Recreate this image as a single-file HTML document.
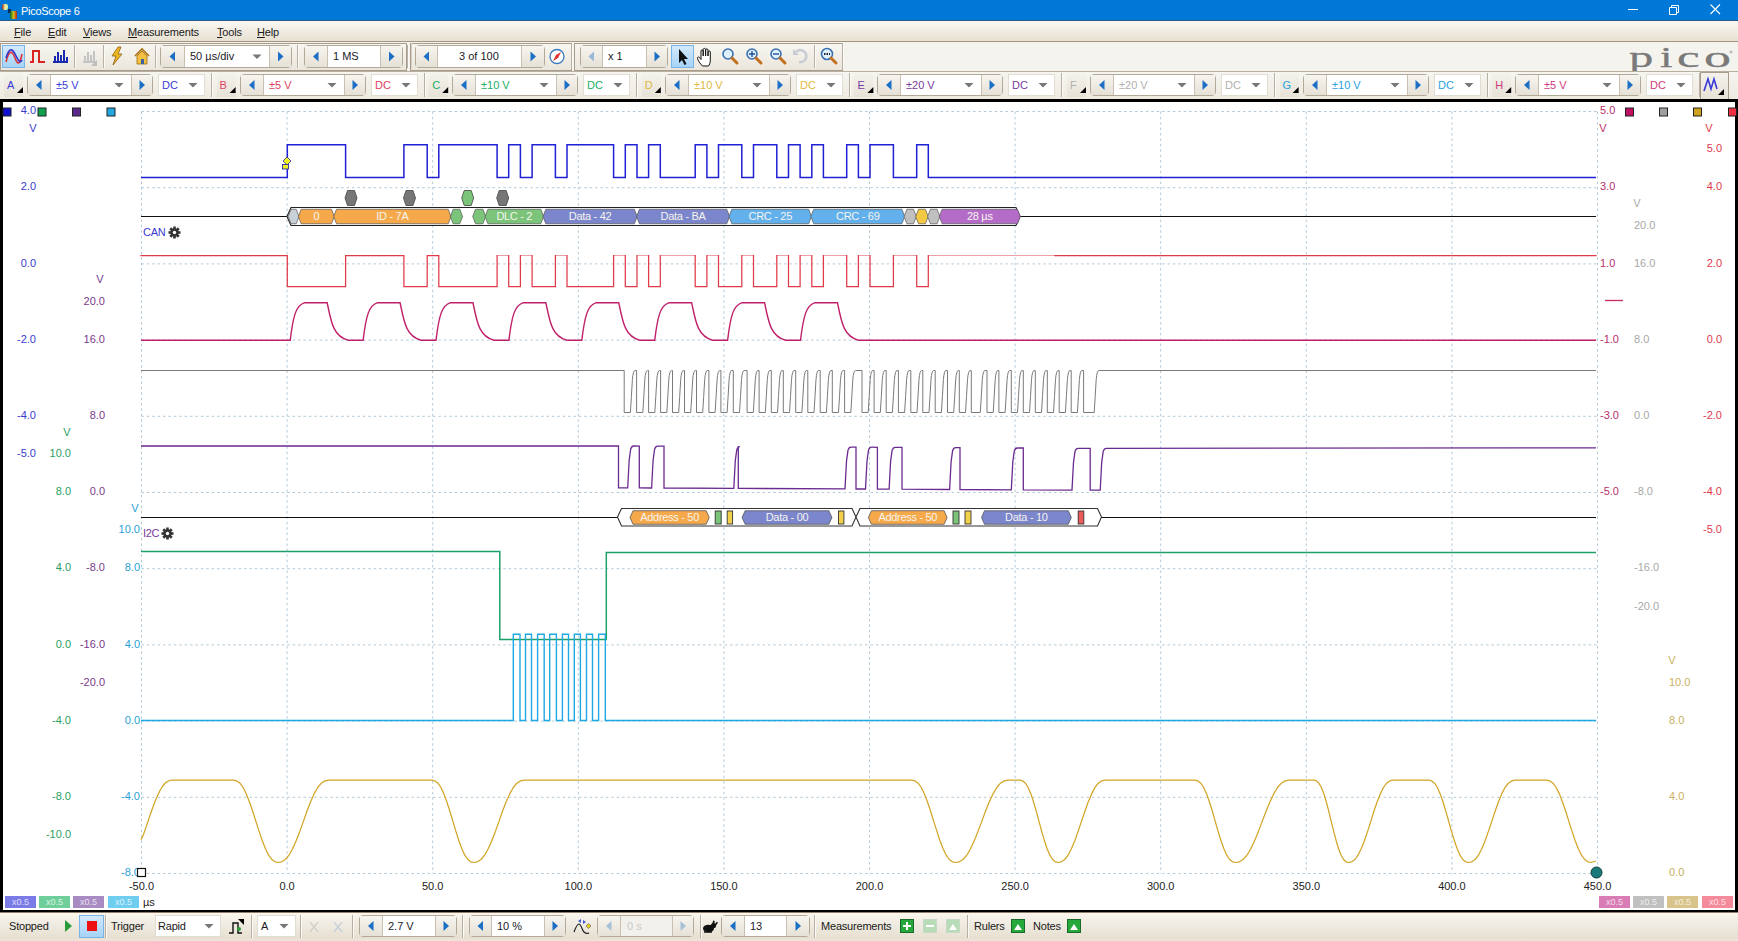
<!DOCTYPE html>
<html><head><meta charset="utf-8"><style>
html,body{margin:0;padding:0;}
body{width:1738px;height:941px;position:relative;overflow:hidden;background:#f0ece3;font-family:"Liberation Sans",sans-serif;}
.t{position:absolute;white-space:nowrap;}
svg{position:absolute;left:0;top:0;}
</style></head><body>

<div style="position:absolute;left:0px;top:0px;width:1738px;height:21px;background:#0078d7;"></div>
<div style="position:absolute;left:0px;top:20px;width:1738px;height:1px;background:#2a5a84;"></div>
<div class="t" style="left:21.0px;top:4.6px;width:200px;height:13px;line-height:13px;font-size:11px;color:#fff;text-align:left;letter-spacing:-0.3px;">PicoScope 6</div>
<div style="position:absolute;left:2px;top:3px;width:14px;height:16px;"><div style="position:absolute;left:0;top:1px;width:6px;height:6px;background:linear-gradient(90deg,#a02010,#f0f0a0 50%,#d0e8a0);border-radius:2px"></div><div style="position:absolute;left:6px;top:6px;width:3px;height:4px;background:#0a2a60;"></div><div style="position:absolute;left:8px;top:8px;width:7px;height:8px;background:linear-gradient(90deg,#0a6a20,#c8c020 50%,#c02010);border-radius:1px"></div></div>
<div style="position:absolute;left:0px;top:21px;width:1738px;height:20px;background:linear-gradient(#fcfaf4,#f1ede4 45%,#e8e1d3);"></div>
<div style="position:absolute;left:0px;top:41px;width:1738px;height:1px;background:#a39582;"></div>
<div class="t" style="left:14.0px;top:25.6px;width:200px;height:13px;line-height:13px;font-size:11px;color:#1a1a1a;text-align:left;letter-spacing:-0.15px;"><u>F</u>ile</div>
<div class="t" style="left:48.0px;top:25.6px;width:200px;height:13px;line-height:13px;font-size:11px;color:#1a1a1a;text-align:left;letter-spacing:-0.15px;"><u>E</u>dit</div>
<div class="t" style="left:83.0px;top:25.6px;width:200px;height:13px;line-height:13px;font-size:11px;color:#1a1a1a;text-align:left;letter-spacing:-0.15px;"><u>V</u>iews</div>
<div class="t" style="left:128.0px;top:25.6px;width:200px;height:13px;line-height:13px;font-size:11px;color:#1a1a1a;text-align:left;letter-spacing:-0.15px;"><u>M</u>easurements</div>
<div class="t" style="left:217.0px;top:25.6px;width:200px;height:13px;line-height:13px;font-size:11px;color:#1a1a1a;text-align:left;letter-spacing:-0.15px;"><u>T</u>ools</div>
<div class="t" style="left:257.0px;top:25.6px;width:200px;height:13px;line-height:13px;font-size:11px;color:#1a1a1a;text-align:left;letter-spacing:-0.15px;"><u>H</u>elp</div>
<div style="position:absolute;left:0px;top:42px;width:1738px;height:29px;background:#f5f3ee;"></div>
<div style="position:absolute;left:0px;top:43px;width:407px;height:28px;box-sizing:border-box;border:1px solid #a89c8c;background:linear-gradient(#f8f6f1,#ebe6dc);"></div>
<div style="position:absolute;left:410px;top:43px;width:162px;height:28px;box-sizing:border-box;border:1px solid #a89c8c;background:linear-gradient(#f8f6f1,#ebe6dc);"></div>
<div style="position:absolute;left:574px;top:43px;width:269px;height:28px;box-sizing:border-box;border:1px solid #a89c8c;background:linear-gradient(#f8f6f1,#ebe6dc);"></div>
<div style="position:absolute;left:0px;top:71px;width:1738px;height:1px;background:#b9afa0;"></div>
<div style="position:absolute;left:0px;top:72px;width:1738px;height:27px;background:linear-gradient(#f7f5f0,#eeeae1);"></div>
<div style="position:absolute;left:2px;top:45px;width:23px;height:23px;box-sizing:border-box;border:1px solid #78b4e6;background:linear-gradient(#d3e9fb,#a6d3f6);"></div>
<div style="position:absolute;left:74px;top:45px;width:1px;height:23px;background:#b8b0a4;"></div>
<div style="position:absolute;left:75px;top:45px;width:1px;height:23px;background:#fbfaf7;"></div>
<div style="position:absolute;left:103px;top:45px;width:1px;height:23px;background:#b8b0a4;"></div>
<div style="position:absolute;left:104px;top:45px;width:1px;height:23px;background:#fbfaf7;"></div>
<div style="position:absolute;left:155px;top:45px;width:1px;height:23px;background:#b8b0a4;"></div>
<div style="position:absolute;left:156px;top:45px;width:1px;height:23px;background:#fbfaf7;"></div>
<div style="position:absolute;left:160px;top:45px;width:132px;height:23px;box-sizing:border-box;border:1px solid #b3a999;border-radius:4px;background:#fff;"></div>
<div style="position:absolute;left:161px;top:46px;width:23px;height:21px;background:linear-gradient(#f7f5f0,#e6e1d6);"></div>
<div style="position:absolute;left:184px;top:46px;width:1px;height:21px;background:#c9c0b2;"></div>
<div style="position:absolute;left:269px;top:46px;width:1px;height:21px;background:#c9c0b2;"></div>
<div style="position:absolute;left:270px;top:46px;width:21px;height:21px;background:linear-gradient(#f7f5f0,#e6e1d6);"></div>
<div class="t" style="left:190.0px;top:50.1px;width:200px;height:13px;line-height:13px;font-size:11px;color:#1a1a2a;text-align:left;">50 µs/div</div>
<div style="position:absolute;left:297px;top:45px;width:1px;height:23px;background:#b8b0a4;"></div>
<div style="position:absolute;left:298px;top:45px;width:1px;height:23px;background:#fbfaf7;"></div>
<div style="position:absolute;left:304px;top:45px;width:99px;height:23px;box-sizing:border-box;border:1px solid #b3a999;border-radius:4px;background:#fff;"></div>
<div style="position:absolute;left:305px;top:46px;width:22px;height:21px;background:linear-gradient(#f7f5f0,#e6e1d6);"></div>
<div style="position:absolute;left:327px;top:46px;width:1px;height:21px;background:#c9c0b2;"></div>
<div style="position:absolute;left:380px;top:46px;width:1px;height:21px;background:#c9c0b2;"></div>
<div style="position:absolute;left:381px;top:46px;width:21px;height:21px;background:linear-gradient(#f7f5f0,#e6e1d6);"></div>
<div class="t" style="left:333.0px;top:50.1px;width:200px;height:13px;line-height:13px;font-size:11px;color:#1a1a2a;text-align:left;">1 MS</div>
<div style="position:absolute;left:407px;top:45px;width:1px;height:23px;background:#b8b0a4;"></div>
<div style="position:absolute;left:408px;top:45px;width:1px;height:23px;background:#fbfaf7;"></div>
<div style="position:absolute;left:411px;top:43px;width:1px;height:26px;background:#d8d1c4"></div>
<div style="position:absolute;left:415px;top:45px;width:130px;height:23px;box-sizing:border-box;border:1px solid #b3a999;border-radius:4px;background:#fff;"></div>
<div style="position:absolute;left:416px;top:46px;width:21px;height:21px;background:linear-gradient(#f7f5f0,#e6e1d6);"></div>
<div style="position:absolute;left:437px;top:46px;width:1px;height:21px;background:#c9c0b2;"></div>
<div style="position:absolute;left:521px;top:46px;width:1px;height:21px;background:#c9c0b2;"></div>
<div style="position:absolute;left:522px;top:46px;width:22px;height:21px;background:linear-gradient(#f7f5f0,#e6e1d6);"></div>
<div class="t" style="left:459.0px;top:50.1px;width:200px;height:13px;line-height:13px;font-size:11px;color:#1a1a2a;text-align:left;">3 of 100</div>
<div style="position:absolute;left:571px;top:43px;width:1px;height:26px;background:#b8b0a4;"></div>
<div style="position:absolute;left:572px;top:43px;width:1px;height:26px;background:#fbfaf7;"></div>
<div style="position:absolute;left:580px;top:45px;width:88px;height:23px;box-sizing:border-box;border:1px solid #b3a999;border-radius:4px;background:#fff;"></div>
<div style="position:absolute;left:581px;top:46px;width:21px;height:21px;background:linear-gradient(#f7f5f0,#e6e1d6);"></div>
<div style="position:absolute;left:602px;top:46px;width:1px;height:21px;background:#c9c0b2;"></div>
<div style="position:absolute;left:646px;top:46px;width:1px;height:21px;background:#c9c0b2;"></div>
<div style="position:absolute;left:647px;top:46px;width:20px;height:21px;background:linear-gradient(#f7f5f0,#e6e1d6);"></div>
<div class="t" style="left:608.0px;top:50.1px;width:200px;height:13px;line-height:13px;font-size:11px;color:#1a1a2a;text-align:left;">x 1</div>
<div style="position:absolute;left:671px;top:45px;width:23px;height:23px;box-sizing:border-box;border:1px solid #78b4e6;background:linear-gradient(#d3e9fb,#a6d3f6);"></div>
<div style="position:absolute;left:814px;top:45px;width:1px;height:23px;background:#b8b0a4;"></div>
<div style="position:absolute;left:815px;top:45px;width:1px;height:23px;background:#fbfaf7;"></div>
<div style="position:absolute;left:842px;top:43px;width:1px;height:26px;background:#b8b0a4;"></div>
<div style="position:absolute;left:843px;top:43px;width:1px;height:26px;background:#fbfaf7;"></div>
<div style="position:absolute;left:1620px;top:40px;width:118px;height:31px;overflow:hidden;"><svg width="118" height="32" style="position:absolute;left:0;top:0"><g font-family="Liberation Serif" font-size="30" fill="#7a7a7a" stroke="#7a7a7a" stroke-width="0.3"><text transform="translate(9,27.2) scale(1.62,1)">p</text><text transform="translate(40,27.2) scale(1.5,1)">i</text><text transform="translate(57,27.2) scale(1.7,1)">c</text><text transform="translate(84,27.2) scale(1.8,1)">o</text></g><circle cx="111" cy="12" r="1.5" fill="#bbb"/></svg></div>
<div style="position:absolute;left:4.0px;top:73px;width:19px;height:24px;background:linear-gradient(#f4f2ec,#e7e2d7);"></div>
<div class="t" style="left:7.0px;top:78.6px;width:200px;height:13px;line-height:13px;font-size:11px;color:#3a3ad8;text-align:left;">A</div>
<div style="position:absolute;left:27px;top:74px;width:126px;height:22px;box-sizing:border-box;border:1px solid #b3a999;border-radius:4px;background:#fff;"></div>
<div style="position:absolute;left:28px;top:75px;width:22px;height:20px;background:linear-gradient(#f7f5f0,#e6e1d6);"></div>
<div style="position:absolute;left:50px;top:75px;width:1px;height:20px;background:#c9c0b2;"></div>
<div style="position:absolute;left:131px;top:75px;width:1px;height:20px;background:#c9c0b2;"></div>
<div style="position:absolute;left:132px;top:75px;width:20px;height:20px;background:linear-gradient(#f7f5f0,#e6e1d6);"></div>
<div class="t" style="left:56.0px;top:78.6px;width:200px;height:13px;line-height:13px;font-size:11px;color:#3a3ad8;text-align:left;">±5 V</div>
<div style="position:absolute;left:158px;top:74px;width:47px;height:22px;box-sizing:border-box;border:1px solid #e2ddd2;background:#fff;"></div>
<div class="t" style="left:162.0px;top:78.6px;width:200px;height:13px;line-height:13px;font-size:11px;color:#3a3ad8;text-align:left;">DC</div>
<div style="position:absolute;left:211px;top:73px;width:1px;height:24px;background:#b8b0a4;"></div>
<div style="position:absolute;left:212px;top:73px;width:1px;height:24px;background:#fbfaf7;"></div>
<div style="position:absolute;left:216.6px;top:73px;width:19px;height:24px;background:linear-gradient(#f4f2ec,#e7e2d7);"></div>
<div class="t" style="left:219.6px;top:78.6px;width:200px;height:13px;line-height:13px;font-size:11px;color:#e04060;text-align:left;">B</div>
<div style="position:absolute;left:240px;top:74px;width:126px;height:22px;box-sizing:border-box;border:1px solid #b3a999;border-radius:4px;background:#fff;"></div>
<div style="position:absolute;left:241px;top:75px;width:22px;height:20px;background:linear-gradient(#f7f5f0,#e6e1d6);"></div>
<div style="position:absolute;left:263px;top:75px;width:1px;height:20px;background:#c9c0b2;"></div>
<div style="position:absolute;left:344px;top:75px;width:1px;height:20px;background:#c9c0b2;"></div>
<div style="position:absolute;left:345px;top:75px;width:20px;height:20px;background:linear-gradient(#f7f5f0,#e6e1d6);"></div>
<div class="t" style="left:269.0px;top:78.6px;width:200px;height:13px;line-height:13px;font-size:11px;color:#e04060;text-align:left;">±5 V</div>
<div style="position:absolute;left:371px;top:74px;width:47px;height:22px;box-sizing:border-box;border:1px solid #e2ddd2;background:#fff;"></div>
<div class="t" style="left:375.0px;top:78.6px;width:200px;height:13px;line-height:13px;font-size:11px;color:#e04060;text-align:left;">DC</div>
<div style="position:absolute;left:424px;top:73px;width:1px;height:24px;background:#b8b0a4;"></div>
<div style="position:absolute;left:425px;top:73px;width:1px;height:24px;background:#fbfaf7;"></div>
<div style="position:absolute;left:429.2px;top:73px;width:19px;height:24px;background:linear-gradient(#f4f2ec,#e7e2d7);"></div>
<div class="t" style="left:432.2px;top:78.6px;width:200px;height:13px;line-height:13px;font-size:11px;color:#20b060;text-align:left;">C</div>
<div style="position:absolute;left:452px;top:74px;width:126px;height:22px;box-sizing:border-box;border:1px solid #b3a999;border-radius:4px;background:#fff;"></div>
<div style="position:absolute;left:453px;top:75px;width:22px;height:20px;background:linear-gradient(#f7f5f0,#e6e1d6);"></div>
<div style="position:absolute;left:475px;top:75px;width:1px;height:20px;background:#c9c0b2;"></div>
<div style="position:absolute;left:556px;top:75px;width:1px;height:20px;background:#c9c0b2;"></div>
<div style="position:absolute;left:557px;top:75px;width:20px;height:20px;background:linear-gradient(#f7f5f0,#e6e1d6);"></div>
<div class="t" style="left:481.0px;top:78.6px;width:200px;height:13px;line-height:13px;font-size:11px;color:#20b060;text-align:left;">±10 V</div>
<div style="position:absolute;left:583px;top:74px;width:47px;height:22px;box-sizing:border-box;border:1px solid #e2ddd2;background:#fff;"></div>
<div class="t" style="left:587.0px;top:78.6px;width:200px;height:13px;line-height:13px;font-size:11px;color:#20b060;text-align:left;">DC</div>
<div style="position:absolute;left:636px;top:73px;width:1px;height:24px;background:#b8b0a4;"></div>
<div style="position:absolute;left:637px;top:73px;width:1px;height:24px;background:#fbfaf7;"></div>
<div style="position:absolute;left:641.8px;top:73px;width:19px;height:24px;background:linear-gradient(#f4f2ec,#e7e2d7);"></div>
<div class="t" style="left:644.8px;top:78.6px;width:200px;height:13px;line-height:13px;font-size:11px;color:#e0b840;text-align:left;">D</div>
<div style="position:absolute;left:665px;top:74px;width:126px;height:22px;box-sizing:border-box;border:1px solid #b3a999;border-radius:4px;background:#fff;"></div>
<div style="position:absolute;left:666px;top:75px;width:22px;height:20px;background:linear-gradient(#f7f5f0,#e6e1d6);"></div>
<div style="position:absolute;left:688px;top:75px;width:1px;height:20px;background:#c9c0b2;"></div>
<div style="position:absolute;left:769px;top:75px;width:1px;height:20px;background:#c9c0b2;"></div>
<div style="position:absolute;left:770px;top:75px;width:20px;height:20px;background:linear-gradient(#f7f5f0,#e6e1d6);"></div>
<div class="t" style="left:694.0px;top:78.6px;width:200px;height:13px;line-height:13px;font-size:11px;color:#e0b840;text-align:left;">±10 V</div>
<div style="position:absolute;left:796px;top:74px;width:47px;height:22px;box-sizing:border-box;border:1px solid #e2ddd2;background:#fff;"></div>
<div class="t" style="left:800.0px;top:78.6px;width:200px;height:13px;line-height:13px;font-size:11px;color:#e0b840;text-align:left;">DC</div>
<div style="position:absolute;left:849px;top:73px;width:1px;height:24px;background:#b8b0a4;"></div>
<div style="position:absolute;left:850px;top:73px;width:1px;height:24px;background:#fbfaf7;"></div>
<div style="position:absolute;left:854.4px;top:73px;width:19px;height:24px;background:linear-gradient(#f4f2ec,#e7e2d7);"></div>
<div class="t" style="left:857.4px;top:78.6px;width:200px;height:13px;line-height:13px;font-size:11px;color:#7a3aa0;text-align:left;">E</div>
<div style="position:absolute;left:877px;top:74px;width:126px;height:22px;box-sizing:border-box;border:1px solid #b3a999;border-radius:4px;background:#fff;"></div>
<div style="position:absolute;left:878px;top:75px;width:22px;height:20px;background:linear-gradient(#f7f5f0,#e6e1d6);"></div>
<div style="position:absolute;left:900px;top:75px;width:1px;height:20px;background:#c9c0b2;"></div>
<div style="position:absolute;left:981px;top:75px;width:1px;height:20px;background:#c9c0b2;"></div>
<div style="position:absolute;left:982px;top:75px;width:20px;height:20px;background:linear-gradient(#f7f5f0,#e6e1d6);"></div>
<div class="t" style="left:906.0px;top:78.6px;width:200px;height:13px;line-height:13px;font-size:11px;color:#7a3aa0;text-align:left;">±20 V</div>
<div style="position:absolute;left:1008px;top:74px;width:47px;height:22px;box-sizing:border-box;border:1px solid #e2ddd2;background:#fff;"></div>
<div class="t" style="left:1012.0px;top:78.6px;width:200px;height:13px;line-height:13px;font-size:11px;color:#7a3aa0;text-align:left;">DC</div>
<div style="position:absolute;left:1061px;top:73px;width:1px;height:24px;background:#b8b0a4;"></div>
<div style="position:absolute;left:1062px;top:73px;width:1px;height:24px;background:#fbfaf7;"></div>
<div style="position:absolute;left:1067.0px;top:73px;width:19px;height:24px;background:linear-gradient(#f4f2ec,#e7e2d7);"></div>
<div class="t" style="left:1070.0px;top:78.6px;width:200px;height:13px;line-height:13px;font-size:11px;color:#b0b0b0;text-align:left;">F</div>
<div style="position:absolute;left:1090px;top:74px;width:126px;height:22px;box-sizing:border-box;border:1px solid #b3a999;border-radius:4px;background:#fff;"></div>
<div style="position:absolute;left:1091px;top:75px;width:22px;height:20px;background:linear-gradient(#f7f5f0,#e6e1d6);"></div>
<div style="position:absolute;left:1113px;top:75px;width:1px;height:20px;background:#c9c0b2;"></div>
<div style="position:absolute;left:1194px;top:75px;width:1px;height:20px;background:#c9c0b2;"></div>
<div style="position:absolute;left:1195px;top:75px;width:20px;height:20px;background:linear-gradient(#f7f5f0,#e6e1d6);"></div>
<div class="t" style="left:1119.0px;top:78.6px;width:200px;height:13px;line-height:13px;font-size:11px;color:#b0b0b0;text-align:left;">±20 V</div>
<div style="position:absolute;left:1221px;top:74px;width:47px;height:22px;box-sizing:border-box;border:1px solid #e2ddd2;background:#fff;"></div>
<div class="t" style="left:1225.0px;top:78.6px;width:200px;height:13px;line-height:13px;font-size:11px;color:#b0b0b0;text-align:left;">DC</div>
<div style="position:absolute;left:1274px;top:73px;width:1px;height:24px;background:#b8b0a4;"></div>
<div style="position:absolute;left:1275px;top:73px;width:1px;height:24px;background:#fbfaf7;"></div>
<div style="position:absolute;left:1279.6px;top:73px;width:19px;height:24px;background:linear-gradient(#f4f2ec,#e7e2d7);"></div>
<div class="t" style="left:1282.6px;top:78.6px;width:200px;height:13px;line-height:13px;font-size:11px;color:#2aa0e0;text-align:left;">G</div>
<div style="position:absolute;left:1303px;top:74px;width:126px;height:22px;box-sizing:border-box;border:1px solid #b3a999;border-radius:4px;background:#fff;"></div>
<div style="position:absolute;left:1304px;top:75px;width:22px;height:20px;background:linear-gradient(#f7f5f0,#e6e1d6);"></div>
<div style="position:absolute;left:1326px;top:75px;width:1px;height:20px;background:#c9c0b2;"></div>
<div style="position:absolute;left:1407px;top:75px;width:1px;height:20px;background:#c9c0b2;"></div>
<div style="position:absolute;left:1408px;top:75px;width:20px;height:20px;background:linear-gradient(#f7f5f0,#e6e1d6);"></div>
<div class="t" style="left:1332.0px;top:78.6px;width:200px;height:13px;line-height:13px;font-size:11px;color:#2aa0e0;text-align:left;">±10 V</div>
<div style="position:absolute;left:1434px;top:74px;width:47px;height:22px;box-sizing:border-box;border:1px solid #e2ddd2;background:#fff;"></div>
<div class="t" style="left:1438.0px;top:78.6px;width:200px;height:13px;line-height:13px;font-size:11px;color:#2aa0e0;text-align:left;">DC</div>
<div style="position:absolute;left:1487px;top:73px;width:1px;height:24px;background:#b8b0a4;"></div>
<div style="position:absolute;left:1488px;top:73px;width:1px;height:24px;background:#fbfaf7;"></div>
<div style="position:absolute;left:1492.2px;top:73px;width:19px;height:24px;background:linear-gradient(#f4f2ec,#e7e2d7);"></div>
<div class="t" style="left:1495.2px;top:78.6px;width:200px;height:13px;line-height:13px;font-size:11px;color:#d03a80;text-align:left;">H</div>
<div style="position:absolute;left:1515px;top:74px;width:126px;height:22px;box-sizing:border-box;border:1px solid #b3a999;border-radius:4px;background:#fff;"></div>
<div style="position:absolute;left:1516px;top:75px;width:22px;height:20px;background:linear-gradient(#f7f5f0,#e6e1d6);"></div>
<div style="position:absolute;left:1538px;top:75px;width:1px;height:20px;background:#c9c0b2;"></div>
<div style="position:absolute;left:1619px;top:75px;width:1px;height:20px;background:#c9c0b2;"></div>
<div style="position:absolute;left:1620px;top:75px;width:20px;height:20px;background:linear-gradient(#f7f5f0,#e6e1d6);"></div>
<div class="t" style="left:1544.0px;top:78.6px;width:200px;height:13px;line-height:13px;font-size:11px;color:#d03a80;text-align:left;">±5 V</div>
<div style="position:absolute;left:1646px;top:74px;width:47px;height:22px;box-sizing:border-box;border:1px solid #e2ddd2;background:#fff;"></div>
<div class="t" style="left:1650.0px;top:78.6px;width:200px;height:13px;line-height:13px;font-size:11px;color:#d03a80;text-align:left;">DC</div>
<div style="position:absolute;left:1699px;top:73px;width:1px;height:24px;background:#b8b0a4;"></div>
<div style="position:absolute;left:1700px;top:73px;width:1px;height:24px;background:#fbfaf7;"></div>
<div style="position:absolute;left:1700px;top:72px;width:29px;height:27px;box-sizing:border-box;border:1px solid #a89c8c;border-bottom:none;background:linear-gradient(#f4f2ec,#e7e2d7);"></div>
<div style="position:absolute;left:0px;top:99px;width:1738px;height:813px;background:#fff;"></div>
<div style="position:absolute;left:0px;top:99px;width:1738px;height:3px;background:#000;"></div>
<div style="position:absolute;left:0px;top:99px;width:3px;height:813px;background:#000;"></div>
<div style="position:absolute;left:1735px;top:99px;width:3px;height:813px;background:#000;"></div>
<div style="position:absolute;left:0px;top:910px;width:1738px;height:2px;background:#000;"></div>
<div style="position:absolute;left:0px;top:912px;width:1738px;height:29px;background:linear-gradient(#8f8070 0,#8f8070 1px,#fcf6ec 1px,#f1ede4 35%,#e7e0d1 90%,#eee6db);"></div>
<div class="t" style="left:143.0px;top:225.6px;width:200px;height:13px;line-height:13px;font-size:11px;color:#3a3ad0;text-align:left;letter-spacing:-0.3px;">CAN</div>
<div class="t" style="left:143.0px;top:526.6px;width:200px;height:13px;line-height:13px;font-size:11px;color:#7a3aa0;text-align:left;letter-spacing:-0.3px;">I2C</div>
<div class="t" style="left:-24.0px;top:103.6px;width:60px;height:13px;line-height:13px;font-size:11px;color:#3a3ad0;text-align:right;">4.0</div>
<div class="t" style="left:-24.0px;top:179.6px;width:60px;height:13px;line-height:13px;font-size:11px;color:#3a3ad0;text-align:right;">2.0</div>
<div class="t" style="left:-24.0px;top:256.6px;width:60px;height:13px;line-height:13px;font-size:11px;color:#3a3ad0;text-align:right;">0.0</div>
<div class="t" style="left:-24.0px;top:332.6px;width:60px;height:13px;line-height:13px;font-size:11px;color:#3a3ad0;text-align:right;">-2.0</div>
<div class="t" style="left:-24.0px;top:408.6px;width:60px;height:13px;line-height:13px;font-size:11px;color:#3a3ad0;text-align:right;">-4.0</div>
<div class="t" style="left:-24.0px;top:446.6px;width:60px;height:13px;line-height:13px;font-size:11px;color:#3a3ad0;text-align:right;">-5.0</div>
<div class="t" style="left:23.0px;top:121.6px;width:20px;height:13px;line-height:13px;font-size:11px;color:#3a3ad0;text-align:center;">V</div>
<div class="t" style="left:45.0px;top:294.6px;width:60px;height:13px;line-height:13px;font-size:11px;color:#7a3a8a;text-align:right;">20.0</div>
<div class="t" style="left:45.0px;top:332.6px;width:60px;height:13px;line-height:13px;font-size:11px;color:#7a3a8a;text-align:right;">16.0</div>
<div class="t" style="left:45.0px;top:408.6px;width:60px;height:13px;line-height:13px;font-size:11px;color:#7a3a8a;text-align:right;">8.0</div>
<div class="t" style="left:45.0px;top:484.6px;width:60px;height:13px;line-height:13px;font-size:11px;color:#7a3a8a;text-align:right;">0.0</div>
<div class="t" style="left:45.0px;top:560.6px;width:60px;height:13px;line-height:13px;font-size:11px;color:#7a3a8a;text-align:right;">-8.0</div>
<div class="t" style="left:45.0px;top:637.6px;width:60px;height:13px;line-height:13px;font-size:11px;color:#7a3a8a;text-align:right;">-16.0</div>
<div class="t" style="left:45.0px;top:675.6px;width:60px;height:13px;line-height:13px;font-size:11px;color:#7a3a8a;text-align:right;">-20.0</div>
<div class="t" style="left:90.0px;top:272.6px;width:20px;height:13px;line-height:13px;font-size:11px;color:#7a3a8a;text-align:center;">V</div>
<div class="t" style="left:11.0px;top:446.6px;width:60px;height:13px;line-height:13px;font-size:11px;color:#2aa060;text-align:right;">10.0</div>
<div class="t" style="left:11.0px;top:484.6px;width:60px;height:13px;line-height:13px;font-size:11px;color:#2aa060;text-align:right;">8.0</div>
<div class="t" style="left:11.0px;top:560.6px;width:60px;height:13px;line-height:13px;font-size:11px;color:#2aa060;text-align:right;">4.0</div>
<div class="t" style="left:11.0px;top:637.6px;width:60px;height:13px;line-height:13px;font-size:11px;color:#2aa060;text-align:right;">0.0</div>
<div class="t" style="left:11.0px;top:713.6px;width:60px;height:13px;line-height:13px;font-size:11px;color:#2aa060;text-align:right;">-4.0</div>
<div class="t" style="left:11.0px;top:789.6px;width:60px;height:13px;line-height:13px;font-size:11px;color:#2aa060;text-align:right;">-8.0</div>
<div class="t" style="left:11.0px;top:827.6px;width:60px;height:13px;line-height:13px;font-size:11px;color:#2aa060;text-align:right;">-10.0</div>
<div class="t" style="left:57.0px;top:425.6px;width:20px;height:13px;line-height:13px;font-size:11px;color:#2aa060;text-align:center;">V</div>
<div class="t" style="left:80.0px;top:522.6px;width:60px;height:13px;line-height:13px;font-size:11px;color:#2a9fd8;text-align:right;">10.0</div>
<div class="t" style="left:80.0px;top:560.6px;width:60px;height:13px;line-height:13px;font-size:11px;color:#2a9fd8;text-align:right;">8.0</div>
<div class="t" style="left:80.0px;top:637.6px;width:60px;height:13px;line-height:13px;font-size:11px;color:#2a9fd8;text-align:right;">4.0</div>
<div class="t" style="left:80.0px;top:713.6px;width:60px;height:13px;line-height:13px;font-size:11px;color:#2a9fd8;text-align:right;">0.0</div>
<div class="t" style="left:80.0px;top:789.6px;width:60px;height:13px;line-height:13px;font-size:11px;color:#2a9fd8;text-align:right;">-4.0</div>
<div class="t" style="left:80.0px;top:865.6px;width:60px;height:13px;line-height:13px;font-size:11px;color:#2a9fd8;text-align:right;">-8.0</div>
<div class="t" style="left:125.0px;top:501.6px;width:20px;height:13px;line-height:13px;font-size:11px;color:#2a9fd8;text-align:center;">V</div>
<div class="t" style="left:1600.0px;top:103.6px;width:60px;height:13px;line-height:13px;font-size:11px;color:#b8306a;text-align:left;">5.0</div>
<div class="t" style="left:1600.0px;top:179.6px;width:60px;height:13px;line-height:13px;font-size:11px;color:#b8306a;text-align:left;">3.0</div>
<div class="t" style="left:1600.0px;top:256.6px;width:60px;height:13px;line-height:13px;font-size:11px;color:#b8306a;text-align:left;">1.0</div>
<div class="t" style="left:1600.0px;top:332.6px;width:60px;height:13px;line-height:13px;font-size:11px;color:#b8306a;text-align:left;">-1.0</div>
<div class="t" style="left:1600.0px;top:408.6px;width:60px;height:13px;line-height:13px;font-size:11px;color:#b8306a;text-align:left;">-3.0</div>
<div class="t" style="left:1600.0px;top:484.6px;width:60px;height:13px;line-height:13px;font-size:11px;color:#b8306a;text-align:left;">-5.0</div>
<div class="t" style="left:1593.0px;top:121.6px;width:20px;height:13px;line-height:13px;font-size:11px;color:#b8306a;text-align:center;">V</div>
<div class="t" style="left:1634.0px;top:218.6px;width:60px;height:13px;line-height:13px;font-size:11px;color:#a8a8a8;text-align:left;">20.0</div>
<div class="t" style="left:1634.0px;top:256.6px;width:60px;height:13px;line-height:13px;font-size:11px;color:#a8a8a8;text-align:left;">16.0</div>
<div class="t" style="left:1634.0px;top:332.6px;width:60px;height:13px;line-height:13px;font-size:11px;color:#a8a8a8;text-align:left;">8.0</div>
<div class="t" style="left:1634.0px;top:408.6px;width:60px;height:13px;line-height:13px;font-size:11px;color:#a8a8a8;text-align:left;">0.0</div>
<div class="t" style="left:1634.0px;top:484.6px;width:60px;height:13px;line-height:13px;font-size:11px;color:#a8a8a8;text-align:left;">-8.0</div>
<div class="t" style="left:1634.0px;top:560.6px;width:60px;height:13px;line-height:13px;font-size:11px;color:#a8a8a8;text-align:left;">-16.0</div>
<div class="t" style="left:1634.0px;top:599.6px;width:60px;height:13px;line-height:13px;font-size:11px;color:#a8a8a8;text-align:left;">-20.0</div>
<div class="t" style="left:1627.0px;top:196.6px;width:20px;height:13px;line-height:13px;font-size:11px;color:#a8a8a8;text-align:center;">V</div>
<div class="t" style="left:1662.0px;top:141.6px;width:60px;height:13px;line-height:13px;font-size:11px;color:#e03a50;text-align:right;">5.0</div>
<div class="t" style="left:1662.0px;top:179.6px;width:60px;height:13px;line-height:13px;font-size:11px;color:#e03a50;text-align:right;">4.0</div>
<div class="t" style="left:1662.0px;top:256.6px;width:60px;height:13px;line-height:13px;font-size:11px;color:#e03a50;text-align:right;">2.0</div>
<div class="t" style="left:1662.0px;top:332.6px;width:60px;height:13px;line-height:13px;font-size:11px;color:#e03a50;text-align:right;">0.0</div>
<div class="t" style="left:1662.0px;top:408.6px;width:60px;height:13px;line-height:13px;font-size:11px;color:#e03a50;text-align:right;">-2.0</div>
<div class="t" style="left:1662.0px;top:484.6px;width:60px;height:13px;line-height:13px;font-size:11px;color:#e03a50;text-align:right;">-4.0</div>
<div class="t" style="left:1662.0px;top:522.6px;width:60px;height:13px;line-height:13px;font-size:11px;color:#e03a50;text-align:right;">-5.0</div>
<div class="t" style="left:1699.0px;top:121.6px;width:20px;height:13px;line-height:13px;font-size:11px;color:#e03a50;text-align:center;">V</div>
<div class="t" style="left:1669.0px;top:675.6px;width:60px;height:13px;line-height:13px;font-size:11px;color:#c8b060;text-align:left;">10.0</div>
<div class="t" style="left:1669.0px;top:713.6px;width:60px;height:13px;line-height:13px;font-size:11px;color:#c8b060;text-align:left;">8.0</div>
<div class="t" style="left:1669.0px;top:789.6px;width:60px;height:13px;line-height:13px;font-size:11px;color:#c8b060;text-align:left;">4.0</div>
<div class="t" style="left:1669.0px;top:865.6px;width:60px;height:13px;line-height:13px;font-size:11px;color:#c8b060;text-align:left;">0.0</div>
<div class="t" style="left:1662.0px;top:653.6px;width:20px;height:13px;line-height:13px;font-size:11px;color:#c8b060;text-align:center;">V</div>
<div class="t" style="left:111.5px;top:879.6px;width:60px;height:13px;line-height:13px;font-size:11px;color:#222;text-align:center;">-50.0</div>
<div class="t" style="left:257.1px;top:879.6px;width:60px;height:13px;line-height:13px;font-size:11px;color:#222;text-align:center;">0.0</div>
<div class="t" style="left:402.7px;top:879.6px;width:60px;height:13px;line-height:13px;font-size:11px;color:#222;text-align:center;">50.0</div>
<div class="t" style="left:548.3px;top:879.6px;width:60px;height:13px;line-height:13px;font-size:11px;color:#222;text-align:center;">100.0</div>
<div class="t" style="left:693.9px;top:879.6px;width:60px;height:13px;line-height:13px;font-size:11px;color:#222;text-align:center;">150.0</div>
<div class="t" style="left:839.5px;top:879.6px;width:60px;height:13px;line-height:13px;font-size:11px;color:#222;text-align:center;">200.0</div>
<div class="t" style="left:985.1px;top:879.6px;width:60px;height:13px;line-height:13px;font-size:11px;color:#222;text-align:center;">250.0</div>
<div class="t" style="left:1130.7px;top:879.6px;width:60px;height:13px;line-height:13px;font-size:11px;color:#222;text-align:center;">300.0</div>
<div class="t" style="left:1276.3px;top:879.6px;width:60px;height:13px;line-height:13px;font-size:11px;color:#222;text-align:center;">350.0</div>
<div class="t" style="left:1421.9px;top:879.6px;width:60px;height:13px;line-height:13px;font-size:11px;color:#222;text-align:center;">400.0</div>
<div class="t" style="left:1567.5px;top:879.6px;width:60px;height:13px;line-height:13px;font-size:11px;color:#222;text-align:center;">450.0</div>
<div class="t" style="left:143.0px;top:895.6px;width:200px;height:13px;line-height:13px;font-size:11px;color:#222;text-align:left;">µs</div>
<div style="position:absolute;left:5px;top:896px;width:31px;height:12px;background:#7b7be8;"></div>
<div style="position:absolute;left:39px;top:896px;width:31px;height:12px;background:#6ecf9a;"></div>
<div style="position:absolute;left:73px;top:896px;width:31px;height:12px;background:#a98bc4;"></div>
<div style="position:absolute;left:108px;top:896px;width:31px;height:12px;background:#6fcdf0;"></div>
<div style="position:absolute;left:1599px;top:896px;width:31px;height:12px;background:#d97bb5;"></div>
<div style="position:absolute;left:1633px;top:896px;width:31px;height:12px;background:#c0c0c0;"></div>
<div style="position:absolute;left:1667px;top:896px;width:31px;height:12px;background:#d8c48a;"></div>
<div style="position:absolute;left:1702px;top:896px;width:31px;height:12px;background:#f58a9a;"></div>
<div class="t" style="left:9.0px;top:919.6px;width:200px;height:13px;line-height:13px;font-size:11px;color:#1a1a1a;text-align:left;letter-spacing:-0.2px;">Stopped</div>
<div style="position:absolute;left:79px;top:915px;width:25px;height:23px;box-sizing:border-box;border:1px solid #78b4e6;background:linear-gradient(#d3e9fb,#a6d3f6);"></div>
<div style="position:absolute;left:87px;top:921px;width:10px;height:10px;background:#ee1111;"></div>
<div style="position:absolute;left:105px;top:915px;width:1px;height:23px;background:#b8b0a4;"></div>
<div style="position:absolute;left:106px;top:915px;width:1px;height:23px;background:#fbfaf7;"></div>
<div class="t" style="left:111.0px;top:919.6px;width:200px;height:13px;line-height:13px;font-size:11px;color:#1a1a1a;text-align:left;letter-spacing:-0.2px;">Trigger</div>
<div style="position:absolute;left:155px;top:915px;width:66px;height:22px;box-sizing:border-box;border:1px solid #e2ddd2;background:#fff;"></div>
<div class="t" style="left:158.0px;top:919.6px;width:200px;height:13px;line-height:13px;font-size:11px;color:#1a1a1a;text-align:left;letter-spacing:-0.2px;">Rapid</div>
<div style="position:absolute;left:251px;top:915px;width:1px;height:23px;background:#b8b0a4;"></div>
<div style="position:absolute;left:252px;top:915px;width:1px;height:23px;background:#fbfaf7;"></div>
<div style="position:absolute;left:257px;top:915px;width:39px;height:22px;box-sizing:border-box;border:1px solid #e2ddd2;background:#fff;"></div>
<div class="t" style="left:261.0px;top:919.6px;width:200px;height:13px;line-height:13px;font-size:11px;color:#1a1a1a;text-align:left;">A</div>
<div style="position:absolute;left:300px;top:915px;width:1px;height:23px;background:#b8b0a4;"></div>
<div style="position:absolute;left:301px;top:915px;width:1px;height:23px;background:#fbfaf7;"></div>
<div style="position:absolute;left:352px;top:915px;width:1px;height:23px;background:#b8b0a4;"></div>
<div style="position:absolute;left:353px;top:915px;width:1px;height:23px;background:#fbfaf7;"></div>
<div style="position:absolute;left:359px;top:915px;width:98px;height:22px;box-sizing:border-box;border:1px solid #b3a999;border-radius:4px;background:#fff;"></div>
<div style="position:absolute;left:360px;top:916px;width:22px;height:20px;background:linear-gradient(#f7f5f0,#e6e1d6);"></div>
<div style="position:absolute;left:382px;top:916px;width:1px;height:20px;background:#c9c0b2;"></div>
<div style="position:absolute;left:435px;top:916px;width:1px;height:20px;background:#c9c0b2;"></div>
<div style="position:absolute;left:436px;top:916px;width:20px;height:20px;background:linear-gradient(#f7f5f0,#e6e1d6);"></div>
<div class="t" style="left:388.0px;top:919.6px;width:200px;height:13px;line-height:13px;font-size:11px;color:#1a1a2a;text-align:left;">2.7 V</div>
<div style="position:absolute;left:462px;top:915px;width:1px;height:23px;background:#b8b0a4;"></div>
<div style="position:absolute;left:463px;top:915px;width:1px;height:23px;background:#fbfaf7;"></div>
<div style="position:absolute;left:469px;top:915px;width:97px;height:22px;box-sizing:border-box;border:1px solid #b3a999;border-radius:4px;background:#fff;"></div>
<div style="position:absolute;left:470px;top:916px;width:21px;height:20px;background:linear-gradient(#f7f5f0,#e6e1d6);"></div>
<div style="position:absolute;left:491px;top:916px;width:1px;height:20px;background:#c9c0b2;"></div>
<div style="position:absolute;left:544px;top:916px;width:1px;height:20px;background:#c9c0b2;"></div>
<div style="position:absolute;left:545px;top:916px;width:20px;height:20px;background:linear-gradient(#f7f5f0,#e6e1d6);"></div>
<div class="t" style="left:497.0px;top:919.6px;width:200px;height:13px;line-height:13px;font-size:11px;color:#1a1a2a;text-align:left;">10 %</div>
<div style="position:absolute;left:597px;top:915px;width:97px;height:22px;box-sizing:border-box;border:1px solid #b3a999;border-radius:4px;background:#fff;"></div>
<div style="position:absolute;left:598px;top:916px;width:22px;height:20px;background:linear-gradient(#f7f5f0,#e6e1d6);"></div>
<div style="position:absolute;left:620px;top:916px;width:1px;height:20px;background:#c9c0b2;"></div>
<div style="position:absolute;left:672px;top:916px;width:1px;height:20px;background:#c9c0b2;"></div>
<div style="position:absolute;left:673px;top:916px;width:20px;height:20px;background:linear-gradient(#f7f5f0,#e6e1d6);"></div>
<div class="t" style="left:626.0px;top:919.6px;width:200px;height:13px;line-height:13px;font-size:11px;color:#c4c4c4;text-align:left;">0 s</div>
<div style="position:absolute;left:621px;top:916px;width:51px;height:20px;background:#f3f1ec;"></div>
<div class="t" style="left:627.0px;top:919.6px;width:200px;height:13px;line-height:13px;font-size:11px;color:#c8c8c8;text-align:left;">0 s</div>
<div style="position:absolute;left:700px;top:915px;width:1px;height:23px;background:#b8b0a4;"></div>
<div style="position:absolute;left:701px;top:915px;width:1px;height:23px;background:#fbfaf7;"></div>
<div style="position:absolute;left:721px;top:915px;width:89px;height:22px;box-sizing:border-box;border:1px solid #b3a999;border-radius:4px;background:#fff;"></div>
<div style="position:absolute;left:722px;top:916px;width:22px;height:20px;background:linear-gradient(#f7f5f0,#e6e1d6);"></div>
<div style="position:absolute;left:744px;top:916px;width:1px;height:20px;background:#c9c0b2;"></div>
<div style="position:absolute;left:786px;top:916px;width:1px;height:20px;background:#c9c0b2;"></div>
<div style="position:absolute;left:787px;top:916px;width:22px;height:20px;background:linear-gradient(#f7f5f0,#e6e1d6);"></div>
<div class="t" style="left:750.0px;top:919.6px;width:200px;height:13px;line-height:13px;font-size:11px;color:#1a1a2a;text-align:left;">13</div>
<div style="position:absolute;left:814px;top:915px;width:1px;height:23px;background:#b8b0a4;"></div>
<div style="position:absolute;left:815px;top:915px;width:1px;height:23px;background:#fbfaf7;"></div>
<div class="t" style="left:821.0px;top:919.6px;width:200px;height:13px;line-height:13px;font-size:11px;color:#1a1a1a;text-align:left;letter-spacing:-0.2px;">Measurements</div>
<div style="position:absolute;left:900px;top:919px;width:14px;height:14px;box-sizing:border-box;border:1px solid #1a6a2a;background:#27a83a;"></div>
<div style="position:absolute;left:923px;top:919px;width:14px;height:14px;box-sizing:border-box;border:1px solid #c8d8c8;background:#b8dcb8;"></div>
<div style="position:absolute;left:946px;top:919px;width:14px;height:14px;box-sizing:border-box;border:1px solid #c8d8c8;background:#b8dcb8;"></div>
<div style="position:absolute;left:967px;top:915px;width:1px;height:23px;background:#b8b0a4;"></div>
<div style="position:absolute;left:968px;top:915px;width:1px;height:23px;background:#fbfaf7;"></div>
<div class="t" style="left:974.0px;top:919.6px;width:200px;height:13px;line-height:13px;font-size:11px;color:#1a1a1a;text-align:left;letter-spacing:-0.2px;">Rulers</div>
<div style="position:absolute;left:1011px;top:919px;width:14px;height:14px;box-sizing:border-box;border:1px solid #1a6a2a;background:#27a83a;"></div>
<div class="t" style="left:1033.0px;top:919.6px;width:200px;height:13px;line-height:13px;font-size:11px;color:#1a1a1a;text-align:left;letter-spacing:-0.2px;">Notes</div>
<div style="position:absolute;left:1067px;top:919px;width:14px;height:14px;box-sizing:border-box;border:1px solid #1a6a2a;background:#27a83a;"></div>
<svg width="1738" height="941" viewBox="0 0 1738 941">
<path d="M1628 9.5h10" stroke="#fff" stroke-width="1"/>
<path d="M1669.5 7.5h7v7h-7z M1671.5 7.5v-2h7v7h-2" stroke="#fff" stroke-width="1" fill="none"/>
<path d="M1710.5 4.5l9.5 9.5 M1720 4.5l-9.5 9.5" stroke="#fff" stroke-width="1.1" fill="none"/>
<path d="M6 62 C9 50,12 50,15 58 S20 64,22 54" stroke="#d33" stroke-width="1.6" fill="none"/>
<path d="M6 58 C9 48,12 48,15 54 S20 64,22 60" stroke="#33c" stroke-width="1.6" fill="none"/>
<path d="M30 62h3v-11h6v11h6" stroke="#d22" stroke-width="2" fill="none"/>
<path d="M33 51h6v11" stroke="#aa3322" stroke-width="1" fill="none" opacity=".5"/>
<path d="M53 62h15 M55 61v-5 M58 61v-9 M61 61v-6 M64 61v-11 M67 61v-4" stroke="#1a2ab0" stroke-width="2" fill="none"/>
<path d="M83 62h14 M85 61v-5 M88 61v-9 M91 61v-6 M94 61v-10" stroke="#c4c4c4" stroke-width="2" fill="none"/><path d="M91 66l6-6v6z" fill="#bdbdbd"/>
<path d="M118 47l-6 9h4l-3 9 9-11h-4l3-7z" fill="#f0b820" stroke="#8a6010" stroke-width=".8"/>
<path d="M135 56l7-7 7 7" stroke="#b07010" stroke-width="1.6" fill="none"/><path d="M137 56v8h10v-8l-5-5z" fill="#f3c040" stroke="#9a6a10" stroke-width=".8"/><path d="M141 64v-5h3v5" fill="#3a60a0"/>
<path d="M175.0 51.5L169.5 56.5L175.0 61.5z" fill="#1c6fc4"/>
<path d="M278.0 51.5L283.5 56.5L278.0 61.5z" fill="#1c6fc4"/>
<path d="M252.5 54.5h9l-4.5 4.5z" fill="#777"/>
<path d="M318.5 51.5L313.0 56.5L318.5 61.5z" fill="#1c6fc4"/>
<path d="M389.0 51.5L394.5 56.5L389.0 61.5z" fill="#1c6fc4"/>
<path d="M429.0 51.5L423.5 56.5L429.0 61.5z" fill="#1c6fc4"/>
<path d="M530.5 51.5L536.0 56.5L530.5 61.5z" fill="#1c6fc4"/>
<circle cx="557" cy="56.5" r="7" fill="#fff" stroke="#3a7ac0" stroke-width="1.3"/><path d="M553 61l3-6 5-3-3 6z" fill="#e03030"/>
<path d="M594.0 51.5L588.5 56.5L594.0 61.5z" fill="#9ab8d8"/>
<path d="M654.5 51.5L660.0 56.5L654.5 61.5z" fill="#1c6fc4"/>
<path d="M679 49v14l3-3 2.5 5 2-1-2.5-5h4z" fill="#111"/>
<path d="M702.5 66C700 63.5 698 60.5 697.5 58.5C697.2 57.2 698.5 56.5 699.5 57.5L701 59.5V51C701 49.5 703.2 49.5 703.2 51V56V49.5C703.2 48 705.6 48 705.6 49.5V56V50C705.6 48.5 708 48.5 708 50V56V52C708 50.5 710.3 50.5 710.3 52V60.5C710.3 63 709.3 65 708.5 66z" fill="#fff" stroke="#111" stroke-width="1"/>
<circle cx="728" cy="54" r="5" fill="#dff0ff" stroke="#3b6fb0" stroke-width="1.6"/><path d="M732 58l5 5" stroke="#c07020" stroke-width="3" stroke-linecap="round"/>
<circle cx="752" cy="54" r="5" fill="#dff0ff" stroke="#3b6fb0" stroke-width="1.6"/><path d="M756 58l5 5" stroke="#c07020" stroke-width="3" stroke-linecap="round"/>
<path d="M749 54h6M752 51v6" stroke="#2050a0" stroke-width="1.4"/>
<circle cx="776" cy="54" r="5" fill="#dff0ff" stroke="#3b6fb0" stroke-width="1.6"/><path d="M780 58l5 5" stroke="#c07020" stroke-width="3" stroke-linecap="round"/>
<path d="M773 54h6" stroke="#2050a0" stroke-width="1.4"/>
<path d="M796 52a6 6 0 1 1 3 10" stroke="#c8ccd4" stroke-width="2.5" fill="none"/><path d="M793 49v6h6z" fill="#c8ccd4"/>
<circle cx="827" cy="54" r="5.5" fill="#dff0ff" stroke="#3b6fb0" stroke-width="1.6"/><path d="M831 58l5 5" stroke="#c07020" stroke-width="3" stroke-linecap="round"/><path d="M824 54h6" stroke="#223" stroke-width="2" stroke-dasharray="1.5 1"/>
<path d="M23.0 93v-6l-6 6z" fill="#000"/>
<path d="M41.5 80.0L36.0 85.0L41.5 90.0z" fill="#1c6fc4"/>
<path d="M139.5 80.0L145.0 85.0L139.5 90.0z" fill="#1c6fc4"/>
<path d="M114.5 83.0h9l-4.5 4.5z" fill="#777"/>
<path d="M188.5 83h9l-4.5 4.5z" fill="#777"/>
<path d="M235.6 93v-6l-6 6z" fill="#000"/>
<path d="M254.5 80.0L249.0 85.0L254.5 90.0z" fill="#1c6fc4"/>
<path d="M352.5 80.0L358.0 85.0L352.5 90.0z" fill="#1c6fc4"/>
<path d="M327.5 83.0h9l-4.5 4.5z" fill="#777"/>
<path d="M401.5 83h9l-4.5 4.5z" fill="#777"/>
<path d="M448.2 93v-6l-6 6z" fill="#000"/>
<path d="M466.5 80.0L461.0 85.0L466.5 90.0z" fill="#1c6fc4"/>
<path d="M564.5 80.0L570.0 85.0L564.5 90.0z" fill="#1c6fc4"/>
<path d="M539.5 83.0h9l-4.5 4.5z" fill="#777"/>
<path d="M613.5 83h9l-4.5 4.5z" fill="#777"/>
<path d="M660.8 93v-6l-6 6z" fill="#000"/>
<path d="M679.5 80.0L674.0 85.0L679.5 90.0z" fill="#1c6fc4"/>
<path d="M777.5 80.0L783.0 85.0L777.5 90.0z" fill="#1c6fc4"/>
<path d="M752.5 83.0h9l-4.5 4.5z" fill="#777"/>
<path d="M826.5 83h9l-4.5 4.5z" fill="#777"/>
<path d="M873.4 93v-6l-6 6z" fill="#000"/>
<path d="M891.5 80.0L886.0 85.0L891.5 90.0z" fill="#1c6fc4"/>
<path d="M989.5 80.0L995.0 85.0L989.5 90.0z" fill="#1c6fc4"/>
<path d="M964.5 83.0h9l-4.5 4.5z" fill="#777"/>
<path d="M1038.5 83h9l-4.5 4.5z" fill="#777"/>
<path d="M1086.0 93v-6l-6 6z" fill="#000"/>
<path d="M1104.5 80.0L1099.0 85.0L1104.5 90.0z" fill="#1c6fc4"/>
<path d="M1202.5 80.0L1208.0 85.0L1202.5 90.0z" fill="#1c6fc4"/>
<path d="M1177.5 83.0h9l-4.5 4.5z" fill="#777"/>
<path d="M1251.5 83h9l-4.5 4.5z" fill="#777"/>
<path d="M1298.6 93v-6l-6 6z" fill="#000"/>
<path d="M1317.5 80.0L1312.0 85.0L1317.5 90.0z" fill="#1c6fc4"/>
<path d="M1415.5 80.0L1421.0 85.0L1415.5 90.0z" fill="#1c6fc4"/>
<path d="M1390.5 83.0h9l-4.5 4.5z" fill="#777"/>
<path d="M1464.5 83h9l-4.5 4.5z" fill="#777"/>
<path d="M1511.2 93v-6l-6 6z" fill="#000"/>
<path d="M1529.5 80.0L1524.0 85.0L1529.5 90.0z" fill="#1c6fc4"/>
<path d="M1627.5 80.0L1633.0 85.0L1627.5 90.0z" fill="#1c6fc4"/>
<path d="M1602.5 83.0h9l-4.5 4.5z" fill="#777"/>
<path d="M1676.5 83h9l-4.5 4.5z" fill="#777"/>
<path d="M1704 91l4-12 3 10 3-10 3 10" stroke="#3a3ad8" stroke-width="1.6" fill="none"/><path d="M1724 95v-6l-6 6z" fill="#000"/>
<path d="M141.5 111.5V873.5" stroke="#b0c8d8" stroke-width="1" stroke-dasharray="2.4 3"/>
<path d="M287.1 111.5V873.5" stroke="#b0c8d8" stroke-width="1" stroke-dasharray="2.4 3"/>
<path d="M432.7 111.5V873.5" stroke="#b0c8d8" stroke-width="1" stroke-dasharray="2.4 3"/>
<path d="M578.3 111.5V873.5" stroke="#b0c8d8" stroke-width="1" stroke-dasharray="2.4 3"/>
<path d="M723.9 111.5V873.5" stroke="#b0c8d8" stroke-width="1" stroke-dasharray="2.4 3"/>
<path d="M869.5 111.5V873.5" stroke="#b0c8d8" stroke-width="1" stroke-dasharray="2.4 3"/>
<path d="M1015.1 111.5V873.5" stroke="#b0c8d8" stroke-width="1" stroke-dasharray="2.4 3"/>
<path d="M1160.7 111.5V873.5" stroke="#b0c8d8" stroke-width="1" stroke-dasharray="2.4 3"/>
<path d="M1306.3 111.5V873.5" stroke="#b0c8d8" stroke-width="1" stroke-dasharray="2.4 3"/>
<path d="M1451.9 111.5V873.5" stroke="#b0c8d8" stroke-width="1" stroke-dasharray="2.4 3"/>
<path d="M1597.5 111.5V873.5" stroke="#b0c8d8" stroke-width="1" stroke-dasharray="2.4 3"/>
<path d="M141.5 111.5H1597.5" stroke="#b0c8d8" stroke-width="1" stroke-dasharray="2.4 3"/>
<path d="M141.5 187.7H1597.5" stroke="#b0c8d8" stroke-width="1" stroke-dasharray="2.4 3"/>
<path d="M141.5 263.9H1597.5" stroke="#b0c8d8" stroke-width="1" stroke-dasharray="2.4 3"/>
<path d="M141.5 340.1H1597.5" stroke="#b0c8d8" stroke-width="1" stroke-dasharray="2.4 3"/>
<path d="M141.5 416.3H1597.5" stroke="#b0c8d8" stroke-width="1" stroke-dasharray="2.4 3"/>
<path d="M141.5 492.5H1597.5" stroke="#b0c8d8" stroke-width="1" stroke-dasharray="2.4 3"/>
<path d="M141.5 568.7H1597.5" stroke="#b0c8d8" stroke-width="1" stroke-dasharray="2.4 3"/>
<path d="M141.5 644.9H1597.5" stroke="#b0c8d8" stroke-width="1" stroke-dasharray="2.4 3"/>
<path d="M141.5 721.1H1597.5" stroke="#b0c8d8" stroke-width="1" stroke-dasharray="2.4 3"/>
<path d="M141.5 797.3H1597.5" stroke="#b0c8d8" stroke-width="1" stroke-dasharray="2.4 3"/>
<path d="M141.5 873.5H1597.5" stroke="#b0c8d8" stroke-width="1" stroke-dasharray="2.4 3"/>
<path d="M141 177.6H287.3V144.8H345.6V177.6H403.9V144.8H427.2V177.6H438.8V144.8H497.1V177.6H508.7V144.8H520.4V177.6H532.1V144.8H555.4V177.6H567.0V144.8H613.6V177.6H625.3V144.8H637.0V177.6H648.6V144.8H660.3V177.6H695.2V144.8H706.9V177.6H718.5V144.8H741.8V177.6H753.5V144.8H776.8V177.6H788.5V144.8H800.1V177.6H811.8V144.8H823.4V177.6H846.7V144.8H858.4V177.6H870.0V144.8H893.4V177.6H916.7V144.8H928.3V177.6H1596" stroke="#2020d4" stroke-width="1.5" fill="none"/>
<path d="M497.1 255.5H508.7M520.4 255.5H532.1M555.4 255.5H567.0M613.6 255.5H625.3M637.0 255.5H648.6M660.3 255.5H695.2M706.9 255.5H718.5M741.8 255.5H753.5M776.8 255.5H788.5M800.1 255.5H811.8M823.4 255.5H846.7M858.4 255.5H870.0M893.4 255.5H916.7M928.3 255.5H1055" stroke="#eea0a8" stroke-width="1.2" fill="none"/>
<path d="M141.0 255.5H287.3M287.3 255.5V286.5M287.3 286.5H345.6M345.6 255.5V286.5M345.6 255.5H403.9M403.9 255.5V286.5M403.9 286.5H427.2M427.2 255.5V286.5M427.2 255.5H438.8M438.8 255.5V286.5M438.8 286.5H497.1M497.1 255.5V286.5M508.7 255.5V286.5M508.7 286.5H520.4M520.4 255.5V286.5M532.1 255.5V286.5M532.1 286.5H555.4M555.4 255.5V286.5M567.0 255.5V286.5M567.0 286.5H613.6M613.6 255.5V286.5M625.3 255.5V286.5M625.3 286.5H637.0M637.0 255.5V286.5M648.6 255.5V286.5M648.6 286.5H660.3M660.3 255.5V286.5M695.2 255.5V286.5M695.2 286.5H706.9M706.9 255.5V286.5M718.5 255.5V286.5M718.5 286.5H741.8M741.8 255.5V286.5M753.5 255.5V286.5M753.5 286.5H776.8M776.8 255.5V286.5M788.5 255.5V286.5M788.5 286.5H800.1M800.1 255.5V286.5M811.8 255.5V286.5M811.8 286.5H823.4M823.4 255.5V286.5M846.7 255.5V286.5M846.7 286.5H858.4M858.4 255.5V286.5M870.0 255.5V286.5M870.0 286.5H893.4M893.4 255.5V286.5M916.7 255.5V286.5M916.7 286.5H928.3M928.3 255.5V286.5M1055 255.5H1596.0" stroke="#e03a48" stroke-width="1.25" fill="none" stroke-linecap="square"/>
<path d="M141 340.3H290.2C293.2 315.3 296.2 305.3 304.2 302.8H327.2C331.2 322.3 333.2 336.3 348.2 340.3H363.1C366.1 315.3 369.1 305.3 377.1 302.8H400.1C404.1 322.3 406.1 336.3 421.1 340.3H436.0C439.0 315.3 442.0 305.3 450.0 302.8H473.0C477.0 322.3 479.0 336.3 494.0 340.3H508.9C511.9 315.3 514.9 305.3 522.9 302.8H545.9C549.9 322.3 551.9 336.3 566.9 340.3H581.8C584.8 315.3 587.8 305.3 595.8 302.8H618.8C622.8 322.3 624.8 336.3 639.8 340.3H654.7C657.7 315.3 660.7 305.3 668.7 302.8H691.7C695.7 322.3 697.7 336.3 712.7 340.3H727.6C730.6 315.3 733.6 305.3 741.6 302.8H764.6C768.6 322.3 770.6 336.3 785.6 340.3H800.5C803.5 315.3 806.5 305.3 814.5 302.8H837.5C841.5 322.3 843.5 336.3 858.5 340.3H1596" stroke="#c0206a" stroke-width="1.4" fill="none"/>
<path d="M141 370.5H624.2V412.5H630.4L631.4 396.5L632.4 379.5Q633.2 370.5 635.0 370.5H636.6V412.5H642.8L643.8 396.5L644.8 379.5Q645.6 370.5 647.4 370.5H648.6V412.5H654.8L655.8 396.5L656.8 379.5Q657.6 370.5 659.4 370.5H660.6V412.5H666.8L667.8 396.5L668.8 379.5Q669.6 370.5 671.4 370.5H672.5V412.5H678.7L679.7 396.5L680.7 379.5Q681.5 370.5 683.3 370.5H684.5V412.5H690.7L691.7 396.5L692.7 379.5Q693.5 370.5 695.3 370.5H696.5V412.5H702.7L703.7 396.5L704.7 379.5Q705.5 370.5 707.3 370.5H708.9V412.5H715.1L716.1 396.5L717.1 379.5Q717.9 370.5 719.7 370.5H720.9V412.5H727.1L728.1 396.5L729.1 379.5Q729.9 370.5 731.7 370.5H733.3V412.5H739.5L740.5 396.5L741.5 379.5Q742.3 370.5 744.1 370.5H747.1V412.5H753.3L754.3 396.5L755.3 379.5Q756.1 370.5 757.9 370.5H759.1V412.5H765.3L766.3 396.5L767.3 379.5Q768.1 370.5 769.9 370.5H771.3V412.5H777.5L778.5 396.5L779.5 379.5Q780.3 370.5 782.1 370.5H783.3V412.5H789.5L790.5 396.5L791.5 379.5Q792.3 370.5 794.1 370.5H795.7V412.5H801.9L802.9 396.5L803.9 379.5Q804.7 370.5 806.5 370.5H807.8V412.5H814.0L815.0 396.5L816.0 379.5Q816.8 370.5 818.6 370.5H820.2V412.5H826.4L827.4 396.5L828.4 379.5Q829.2 370.5 831.0 370.5H832.3V412.5H838.5L839.5 396.5L840.5 379.5Q841.3 370.5 843.1 370.5H844.6V412.5H850.8L851.8 396.5L852.8 379.5Q853.6 370.5 855.4 370.5H862.0V412.5H868.2L869.2 396.5L870.2 379.5Q871.0 370.5 872.8 370.5H874.1V412.5H880.3L881.3 396.5L882.3 379.5Q883.1 370.5 884.9 370.5H886.2V412.5H892.4L893.4 396.5L894.4 379.5Q895.2 370.5 897.0 370.5H898.4V412.5H904.6L905.6 396.5L906.6 379.5Q907.4 370.5 909.2 370.5H910.8V412.5H917.0L918.0 396.5L919.0 379.5Q919.8 370.5 921.6 370.5H922.8V412.5H929.0L930.0 396.5L931.0 379.5Q931.8 370.5 933.6 370.5H935.2V412.5H941.4L942.4 396.5L943.4 379.5Q944.2 370.5 946.0 370.5H947.5V412.5H953.7L954.7 396.5L955.7 379.5Q956.5 370.5 958.3 370.5H959.3V412.5H965.5L966.5 396.5L967.5 379.5Q968.3 370.5 970.1 370.5H971.3V412.5H980.3L981.3 396.5L982.3 379.5Q983.1 370.5 984.9 370.5H987.0V412.5H993.2L994.2 396.5L995.2 379.5Q996.0 370.5 997.8 370.5H998.9V412.5H1005.1L1006.1 396.5L1007.1 379.5Q1007.9 370.5 1009.7 370.5H1011.3V412.5H1017.5L1018.5 396.5L1019.5 379.5Q1020.3 370.5 1022.1 370.5H1023.3V412.5H1029.5L1030.5 396.5L1031.5 379.5Q1032.3 370.5 1034.1 370.5H1035.3V412.5H1041.5L1042.5 396.5L1043.5 379.5Q1044.3 370.5 1046.1 370.5H1047.3V412.5H1053.5L1054.5 396.5L1055.5 379.5Q1056.3 370.5 1058.1 370.5H1059.2V412.5H1065.4L1066.4 396.5L1067.4 379.5Q1068.2 370.5 1070.0 370.5H1071.2V412.5H1077.4L1078.4 396.5L1079.4 379.5Q1080.2 370.5 1082.0 370.5H1083.6V412.5H1094.2L1095.2 396.5L1096.2 379.5Q1097.0 370.5 1098.8 370.5H1596" stroke="#7a7a7a" stroke-width="1" fill="none"/>
<path d="M141 446L618.5 446.0L618.5 487.8L627.7 487.8L629.2 460.0L630.7 449.0Q631.7 446.0 633.7 446.0L639.3 446.1L639.3 487.9L651.6 488.0L653.1 460.2L654.6 449.2Q655.6 446.2 657.6 446.2L664.0 446.2L664.0 488.0L733.8 488.4L735.3 460.6L736.8 449.6Q737.8 446.6 739.8 446.6L738.3 446.6L738.3 488.4L845.0 488.9L846.5 461.1L848.0 450.1Q849.0 447.1 851.0 447.1L856.0 447.2L856.0 489.0L865.5 489.0L867.0 461.2L868.5 450.2Q869.5 447.2 871.5 447.2L877.4 447.3L877.4 489.1L889.1 489.2L890.6 461.4L892.1 450.4Q893.1 447.4 895.1 447.4L902.0 447.4L902.0 489.2L949.6 489.5L951.1 461.7L952.6 450.7Q953.6 447.7 955.6 447.7L960.0 447.7L960.0 489.5L1011.3 489.8L1012.8 462.0L1014.3 451.0Q1015.3 448.0 1017.3 448.0L1023.3 448.0L1023.3 489.8L1072.0 490.1L1073.5 462.3L1075.0 451.3Q1076.0 448.3 1078.0 448.3L1090.2 448.4L1090.2 490.2L1100.2 490.2L1101.7 462.4L1103.2 451.4Q1104.2 448.4 1106.2 448.4L1596 447.8" stroke="#6a2a90" stroke-width="1.3" fill="none"/>
<path d="M141 551.5H499.8V639.4H606.3V552.5H1596" stroke="#1fa06a" stroke-width="1.5" fill="none"/>
<path d="M141 720.5H513.3V634.3H520V720.5H525.5V634.3H531.5V720.5H537.6V634.3H544.2V720.5H549.7V634.3H556.4V720.5H562.4V634.3H568.5V720.5H574.3V634.3H580.4V720.5H586.5V634.3H592.5V720.5H598.6V634.3H605.3V720.5H1596" stroke="#1ea8e4" stroke-width="1.4" fill="none"/>
<path d="M141.0 839.6 L143.2 835.2 L145.6 828.4 L148.0 821.4 L150.4 814.3 L152.8 807.5 L155.2 801.1 L157.6 795.4 L160.0 790.5 L162.4 786.5 L164.8 783.5 L167.2 781.6 L169.6 780.5 L172.0 780.2 L233.6 780.2 L236.8 780.9 L240.0 783.2 L243.2 787.5 L246.3 793.9 L249.5 802.0 L252.7 811.3 L255.9 821.4 L259.1 831.4 L262.3 840.7 L265.5 848.8 L268.6 855.2 L271.8 859.5 L275.0 861.8 L278.2 862.5 L278.2 862.5 L281.8 861.8 L285.4 859.5 L289.0 855.2 L292.6 848.8 L296.2 840.7 L299.8 831.4 L303.4 821.4 L306.9 811.3 L310.5 802.0 L314.1 793.9 L317.7 787.5 L321.3 783.2 L324.9 780.9 L328.5 780.2 L432.0 780.2 L435.0 780.9 L438.0 783.2 L441.0 787.5 L443.9 793.9 L446.9 802.0 L449.9 811.3 L452.9 821.4 L455.9 831.4 L458.9 840.7 L461.9 848.8 L464.8 855.2 L467.8 859.5 L470.8 861.8 L473.8 862.5 L473.8 862.5 L477.4 861.8 L481.0 859.5 L484.6 855.2 L488.2 848.8 L491.8 840.7 L495.4 831.4 L499.0 821.4 L502.5 811.3 L506.1 802.0 L509.7 793.9 L513.3 787.5 L516.9 783.2 L520.5 780.9 L524.1 780.2 L912.0 780.2 L915.1 780.9 L918.2 783.2 L921.3 787.5 L924.4 793.9 L927.5 802.0 L930.6 811.3 L933.8 821.4 L936.9 831.4 L940.0 840.7 L943.1 848.8 L946.2 855.2 L949.3 859.5 L952.4 861.8 L955.5 862.5 L955.5 862.5 L959.2 861.8 L963.0 859.5 L966.8 855.2 L970.5 848.8 L974.2 840.7 L978.0 831.4 L981.8 821.4 L985.5 811.3 L989.2 802.0 L993.0 793.9 L996.8 787.5 L1000.5 783.2 L1004.2 780.9 L1008.0 780.2 L1020.0 780.2 L1022.7 780.9 L1025.4 783.2 L1028.1 787.5 L1030.9 793.9 L1033.6 802.0 L1036.3 811.3 L1039.0 821.4 L1041.7 831.4 L1044.4 840.7 L1047.1 848.8 L1049.9 855.2 L1052.6 859.5 L1055.3 861.8 L1058.0 862.5 L1058.0 862.5 L1061.4 861.8 L1064.7 859.5 L1068.1 855.2 L1071.4 848.8 L1074.8 840.7 L1078.1 831.4 L1081.5 821.4 L1084.9 811.3 L1088.2 802.0 L1091.6 793.9 L1094.9 787.5 L1098.3 783.2 L1101.6 780.9 L1105.0 780.2 L1195.0 780.2 L1197.9 780.9 L1200.8 783.2 L1203.7 787.5 L1206.6 793.9 L1209.5 802.0 L1212.4 811.3 L1215.2 821.4 L1218.1 831.4 L1221.0 840.7 L1223.9 848.8 L1226.8 855.2 L1229.7 859.5 L1232.6 861.8 L1235.5 862.5 L1235.5 862.5 L1239.3 861.8 L1243.1 859.5 L1247.0 855.2 L1250.8 848.8 L1254.6 840.7 L1258.4 831.4 L1262.2 821.4 L1266.1 811.3 L1269.9 802.0 L1273.7 793.9 L1277.5 787.5 L1281.4 783.2 L1285.2 780.9 L1289.0 780.2 L1314.0 780.2 L1316.5 780.9 L1318.9 783.2 L1321.4 787.5 L1323.9 793.9 L1326.3 802.0 L1328.8 811.3 L1331.2 821.4 L1333.7 831.4 L1336.2 840.7 L1338.6 848.8 L1341.1 855.2 L1343.6 859.5 L1346.0 861.8 L1348.5 862.5 L1348.5 862.5 L1351.7 861.8 L1354.9 859.5 L1358.0 855.2 L1361.2 848.8 L1364.4 840.7 L1367.6 831.4 L1370.8 821.4 L1373.9 811.3 L1377.1 802.0 L1380.3 793.9 L1383.5 787.5 L1386.6 783.2 L1389.8 780.9 L1393.0 780.2 L1428.9 780.2 L1431.7 780.9 L1434.6 783.2 L1437.4 787.5 L1440.2 793.9 L1443.0 802.0 L1445.9 811.3 L1448.7 821.4 L1451.5 831.4 L1454.4 840.7 L1457.2 848.8 L1460.0 855.2 L1462.8 859.5 L1465.7 861.8 L1468.5 862.5 L1468.5 862.5 L1471.8 861.8 L1475.1 859.5 L1478.5 855.2 L1481.8 848.8 L1485.1 840.7 L1488.4 831.4 L1491.8 821.4 L1495.1 811.3 L1498.4 802.0 L1501.7 793.9 L1505.0 787.5 L1508.4 783.2 L1511.7 780.9 L1515.0 780.2 L1546.7 780.2 L1549.9 780.9 L1553.0 783.2 L1556.2 787.5 L1559.4 793.9 L1562.5 802.0 L1565.7 811.3 L1568.8 821.4 L1572.0 831.4 L1575.2 840.7 L1578.3 848.8 L1581.5 855.2 L1584.7 859.5 L1587.8 861.8 L1591.0 862.5 L1596.0 861.0" stroke="#d2a526" stroke-width="1.25" fill="none" stroke-linejoin="round"/>
<path d="M141 216.5H290 M1018 216.5H1596" stroke="#111" stroke-width="1.1"/>
<path d="M291 207.5H1016L1020 216.5L1016 225.5H291L287 216.5z" fill="#fff" stroke="#222" stroke-width="1.1"/>
<path d="M288.2 216.5L291.0 209.25H296.2L299.0 216.5L296.2 223.75H291.0z" fill="#c8d0d8" stroke="#555" stroke-width="0.7"/>
<path d="M298.4 216.5L301.2 209.25H331.5L334.3 216.5L331.5 223.75H301.2z" fill="#f5a94a" stroke="#555" stroke-width="0.7"/>
<path d="M333.7 216.5L336.5 209.25H448.2L451.0 216.5L448.2 223.75H336.5z" fill="#f5a94a" stroke="#555" stroke-width="0.7"/>
<path d="M450.4 216.5L453.2 209.25H459.8L462.6 216.5L459.8 223.75H453.2z" fill="#7cc47a" stroke="#555" stroke-width="0.7"/>
<path d="M472.7 216.5L475.5 209.25H482.9L485.7 216.5L482.9 223.75H475.5z" fill="#7cc47a" stroke="#555" stroke-width="0.7"/>
<path d="M485.1 216.5L487.9 209.25H540.8L543.6 216.5L540.8 223.75H487.9z" fill="#7cc47a" stroke="#555" stroke-width="0.7"/>
<path d="M543.0 216.5L545.8 209.25H634.4L637.2 216.5L634.4 223.75H545.8z" fill="#7b86cc" stroke="#555" stroke-width="0.7"/>
<path d="M636.6 216.5L639.4 209.25H726.8L729.6 216.5L726.8 223.75H639.4z" fill="#7b86cc" stroke="#555" stroke-width="0.7"/>
<path d="M729.0 216.5L731.8 209.25H808.7L811.5 216.5L808.7 223.75H731.8z" fill="#62b0ec" stroke="#555" stroke-width="0.7"/>
<path d="M810.9 216.5L813.7 209.25H901.9L904.7 216.5L901.9 223.75H813.7z" fill="#62b0ec" stroke="#555" stroke-width="0.7"/>
<path d="M904.1 216.5L906.9 209.25H913.5L916.3 216.5L913.5 223.75H906.9z" fill="#c0c0c0" stroke="#555" stroke-width="0.7"/>
<path d="M915.7 216.5L918.5 209.25H925.4L928.2 216.5L925.4 223.75H918.5z" fill="#f3c842" stroke="#555" stroke-width="0.7"/>
<path d="M927.6 216.5L930.4 209.25H937.1L939.9 216.5L937.1 223.75H930.4z" fill="#c0c0c0" stroke="#555" stroke-width="0.7"/>
<path d="M939.3 216.5L942.1 209.25H1017.5L1020.3 216.5L1017.5 223.75H942.1z" fill="#b46cc8" stroke="#555" stroke-width="0.7"/>
<path d="M345 198L347.5 190.5H354.5L357 198L354.5 205.5H347.5z" fill="#777" stroke="#444" stroke-width=".8"/>
<path d="M403.5 198L406.0 190.5H413.0L415.5 198L413.0 205.5H406.0z" fill="#777" stroke="#444" stroke-width=".8"/>
<path d="M461.7 198L464.2 190.5H471.2L473.7 198L471.2 205.5H464.2z" fill="#7cc47a" stroke="#444" stroke-width=".8"/>
<path d="M496.7 198L499.2 190.5H506.2L508.7 198L506.2 205.5H499.2z" fill="#777" stroke="#444" stroke-width=".8"/>
<path d="M287 157l4 4-4 4-4-4z" fill="#f0f020" stroke="#2a2aa0" stroke-width=".8"/><rect x="282.5" y="164.5" width="6" height="4.5" fill="#f0f020" stroke="#2a2aa0" stroke-width=".9"/>
<path d="M141 517.5H618 M1101 517.5H1596" stroke="#111" stroke-width="1.1"/>
<path d="M617.5 517L621.5 508.5H852L856 517L852 526H621.5z" fill="#fff" stroke="#333" stroke-width="1.1"/>
<path d="M856 517L860 508.5H1097.5L1101.5 517L1097.5 526H860z" fill="#fff" stroke="#333" stroke-width="1.1"/>
<path d="M630.0 517.5L633.0 510.75H706.2L709.2 517.5L706.2 524.25H633.0z" fill="#f5a94a" stroke="#555" stroke-width="0.8"/>
<path d="M742.1 517.5L745.1 510.75H828.9L831.9 517.5L828.9 524.25H745.1z" fill="#7b86cc" stroke="#555" stroke-width="0.8"/>
<path d="M868.4 517.5L871.4 510.75H944.1L947.1 517.5L944.1 524.25H871.4z" fill="#f5a94a" stroke="#555" stroke-width="0.8"/>
<path d="M981.5 517.5L984.5 510.75H1068.3L1071.3 517.5L1068.3 524.25H984.5z" fill="#7b86cc" stroke="#555" stroke-width="0.8"/>
<rect x="715.2" y="511" width="6.0" height="13" fill="#7cc47a" stroke="#333" stroke-width=".9"/>
<rect x="727.2" y="511" width="5.399999999999977" height="13" fill="#f3d04a" stroke="#333" stroke-width=".9"/>
<rect x="838.5" y="511" width="5.399999999999977" height="13" fill="#f3d04a" stroke="#333" stroke-width=".9"/>
<rect x="953" y="511" width="6" height="13" fill="#7cc47a" stroke="#333" stroke-width=".9"/>
<rect x="965" y="511" width="6" height="13" fill="#f3d04a" stroke="#333" stroke-width=".9"/>
<rect x="1078.2" y="511" width="5.599999999999909" height="13" fill="#ee5a5a" stroke="#333" stroke-width=".9"/>
<rect x="173.2" y="226.5" width="2.6" height="3" fill="#333" transform="rotate(0 174.5 232.5)"/><rect x="173.2" y="226.5" width="2.6" height="3" fill="#333" transform="rotate(45 174.5 232.5)"/><rect x="173.2" y="226.5" width="2.6" height="3" fill="#333" transform="rotate(90 174.5 232.5)"/><rect x="173.2" y="226.5" width="2.6" height="3" fill="#333" transform="rotate(135 174.5 232.5)"/><rect x="173.2" y="226.5" width="2.6" height="3" fill="#333" transform="rotate(180 174.5 232.5)"/><rect x="173.2" y="226.5" width="2.6" height="3" fill="#333" transform="rotate(225 174.5 232.5)"/><rect x="173.2" y="226.5" width="2.6" height="3" fill="#333" transform="rotate(270 174.5 232.5)"/><rect x="173.2" y="226.5" width="2.6" height="3" fill="#333" transform="rotate(315 174.5 232.5)"/><circle cx="174.5" cy="232.5" r="4.2" fill="#333"/><circle cx="174.5" cy="232.5" r="1.7" fill="#fff"/>
<rect x="166.2" y="527.5" width="2.6" height="3" fill="#333" transform="rotate(0 167.5 533.5)"/><rect x="166.2" y="527.5" width="2.6" height="3" fill="#333" transform="rotate(45 167.5 533.5)"/><rect x="166.2" y="527.5" width="2.6" height="3" fill="#333" transform="rotate(90 167.5 533.5)"/><rect x="166.2" y="527.5" width="2.6" height="3" fill="#333" transform="rotate(135 167.5 533.5)"/><rect x="166.2" y="527.5" width="2.6" height="3" fill="#333" transform="rotate(180 167.5 533.5)"/><rect x="166.2" y="527.5" width="2.6" height="3" fill="#333" transform="rotate(225 167.5 533.5)"/><rect x="166.2" y="527.5" width="2.6" height="3" fill="#333" transform="rotate(270 167.5 533.5)"/><rect x="166.2" y="527.5" width="2.6" height="3" fill="#333" transform="rotate(315 167.5 533.5)"/><circle cx="167.5" cy="533.5" r="4.2" fill="#333"/><circle cx="167.5" cy="533.5" r="1.7" fill="#fff"/>
<rect x="137.5" y="868.5" width="8" height="8" fill="#fff" stroke="#111" stroke-width="1.2"/>
<circle cx="1596.5" cy="872.5" r="5.5" fill="#1a7a7a" stroke="#0a3a3a" stroke-width="1"/>
<path d="M1605 300.5H1623" stroke="#c82a60" stroke-width="1.3"/>
<rect x="3.0" y="108" width="8" height="8" fill="#1010d0" stroke="#222" stroke-width="1"/>
<rect x="38.0" y="108" width="8" height="8" fill="#10a050" stroke="#222" stroke-width="1"/>
<rect x="72.5" y="108" width="8" height="8" fill="#5a2a8a" stroke="#222" stroke-width="1"/>
<rect x="107.0" y="108" width="8" height="8" fill="#20a8e0" stroke="#222" stroke-width="1"/>
<rect x="1625.5" y="108" width="8" height="8" fill="#c01060" stroke="#222" stroke-width="1"/>
<rect x="1659.5" y="108" width="8" height="8" fill="#a0a0a0" stroke="#222" stroke-width="1"/>
<rect x="1693.5" y="108" width="8" height="8" fill="#d0a020" stroke="#222" stroke-width="1"/>
<rect x="1728.5" y="108" width="8" height="8" fill="#f03040" stroke="#222" stroke-width="1"/>
<path d="M65 920v12l7-6z" fill="#2a9a3a"/>
<path d="M204.5 924h9l-4.5 4.5z" fill="#777"/>
<path d="M229 933h4v-10h5v10h4" stroke="#111" stroke-width="1.4" fill="none"/><path d="M244 919v6l-6-6z" fill="#000"/><circle cx="239" cy="929" r="2" fill="#2a9a3a"/>
<path d="M279.5 924h9l-4.5 4.5z" fill="#777"/>
<path d="M310 932l8-10 M310 922l8 10" stroke="#c8c8c8" stroke-width="1.2"/><path d="M334 922l8 10 M334 932l8-10" stroke="#b8c8d8" stroke-width="1.2"/>
<path d="M373.5 921.0L368.0 926.0L373.5 931.0z" fill="#1c6fc4"/>
<path d="M443.5 921.0L449.0 926.0L443.5 931.0z" fill="#1c6fc4"/>
<path d="M483.0 921.0L477.5 926.0L483.0 931.0z" fill="#1c6fc4"/>
<path d="M552.5 921.0L558.0 926.0L552.5 931.0z" fill="#1c6fc4"/>
<path d="M574 932c2-5 3-8 5-8s3 6 5 8 3 2 5 1" stroke="#222" stroke-width="1.2" fill="none"/><path d="M586 926l2.5-2.5 2.5 2.5-2.5 2.5z" fill="#e8d020" stroke="#555" stroke-width=".6"/><path d="M578 921l3-2v4zM583 920l3 2-3 2z" fill="#3a5ad0"/>
<path d="M611.5 921.0L606.0 926.0L611.5 931.0z" fill="#a8c0d8"/>
<path d="M680.5 921.0L686.0 926.0L680.5 931.0z" fill="#a8c0d8"/>
<ellipse cx="708.5" cy="928.5" rx="5.5" ry="3.8" fill="#111"/><circle cx="713.5" cy="925.5" r="2.6" fill="#111"/><path d="M712 924.5l1.2-4 1.6.4-.8 4zM714.2 925l2.6-3.2 1.2.9-2.3 3z" fill="#111"/><path d="M704 932h8" stroke="#111" stroke-width="1.5"/>
<path d="M735.5 921.0L730.0 926.0L735.5 931.0z" fill="#1c6fc4"/>
<path d="M795.5 921.0L801.0 926.0L795.5 931.0z" fill="#1c6fc4"/>
<path d="M903 926h8M907 922v8" stroke="#fff" stroke-width="2"/>
<path d="M926 926h8" stroke="#fff" stroke-width="2"/>
<path d="M949 930l4-6 4 6z" fill="#fff"/>
<path d="M1014 930l4-6 4 6z" fill="#fff"/>
<path d="M1070 930l4-6 4 6z" fill="#fff"/>
</svg>
<div class="t" style="left:288.9px;top:210.1px;width:55px;height:13px;line-height:13px;font-size:11px;color:#f6f4ee;text-align:center;letter-spacing:-0.3px;">0</div>
<div class="t" style="left:324.4px;top:210.1px;width:136px;height:13px;line-height:13px;font-size:11px;color:#f6f4ee;text-align:center;letter-spacing:-0.3px;">ID - 7A</div>
<div class="t" style="left:475.8px;top:210.1px;width:77px;height:13px;line-height:13px;font-size:11px;color:#f6f4ee;text-align:center;letter-spacing:-0.3px;">DLC - 2</div>
<div class="t" style="left:533.6px;top:210.1px;width:113px;height:13px;line-height:13px;font-size:11px;color:#f6f4ee;text-align:center;letter-spacing:-0.3px;">Data - 42</div>
<div class="t" style="left:627.1px;top:210.1px;width:112px;height:13px;line-height:13px;font-size:11px;color:#f6f4ee;text-align:center;letter-spacing:-0.3px;">Data - BA</div>
<div class="t" style="left:719.8px;top:210.1px;width:101px;height:13px;line-height:13px;font-size:11px;color:#f6f4ee;text-align:center;letter-spacing:-0.3px;">CRC - 25</div>
<div class="t" style="left:801.3px;top:210.1px;width:113px;height:13px;line-height:13px;font-size:11px;color:#f6f4ee;text-align:center;letter-spacing:-0.3px;">CRC - 69</div>
<div class="t" style="left:929.8px;top:210.1px;width:100px;height:13px;line-height:13px;font-size:11px;color:#f6f4ee;text-align:center;letter-spacing:-0.3px;">28 µs</div>
<div class="t" style="left:620.1px;top:511.1px;width:99px;height:13px;line-height:13px;font-size:11px;color:#f6f4ee;text-align:center;letter-spacing:-0.3px;">Address - 50</div>
<div class="t" style="left:732.5px;top:511.1px;width:109px;height:13px;line-height:13px;font-size:11px;color:#f6f4ee;text-align:center;letter-spacing:-0.3px;">Data - 00</div>
<div class="t" style="left:858.8px;top:511.1px;width:98px;height:13px;line-height:13px;font-size:11px;color:#f6f4ee;text-align:center;letter-spacing:-0.3px;">Address - 50</div>
<div class="t" style="left:971.9px;top:511.1px;width:109px;height:13px;line-height:13px;font-size:11px;color:#f6f4ee;text-align:center;letter-spacing:-0.3px;">Data - 10</div>
<div class="t" style="left:5.0px;top:895.6px;width:31px;height:13px;line-height:13px;font-size:9px;color:rgba(255,255,255,.75);text-align:center;">x0.5</div>
<div class="t" style="left:39.0px;top:895.6px;width:31px;height:13px;line-height:13px;font-size:9px;color:rgba(255,255,255,.75);text-align:center;">x0.5</div>
<div class="t" style="left:73.0px;top:895.6px;width:31px;height:13px;line-height:13px;font-size:9px;color:rgba(255,255,255,.75);text-align:center;">x0.5</div>
<div class="t" style="left:108.0px;top:895.6px;width:31px;height:13px;line-height:13px;font-size:9px;color:rgba(255,255,255,.75);text-align:center;">x0.5</div>
<div class="t" style="left:1599.0px;top:895.6px;width:31px;height:13px;line-height:13px;font-size:9px;color:rgba(255,255,255,.75);text-align:center;">x0.5</div>
<div class="t" style="left:1633.0px;top:895.6px;width:31px;height:13px;line-height:13px;font-size:9px;color:rgba(255,255,255,.75);text-align:center;">x0.5</div>
<div class="t" style="left:1667.0px;top:895.6px;width:31px;height:13px;line-height:13px;font-size:9px;color:rgba(255,255,255,.75);text-align:center;">x0.5</div>
<div class="t" style="left:1702.0px;top:895.6px;width:31px;height:13px;line-height:13px;font-size:9px;color:rgba(255,255,255,.75);text-align:center;">x0.5</div>
</body></html>
